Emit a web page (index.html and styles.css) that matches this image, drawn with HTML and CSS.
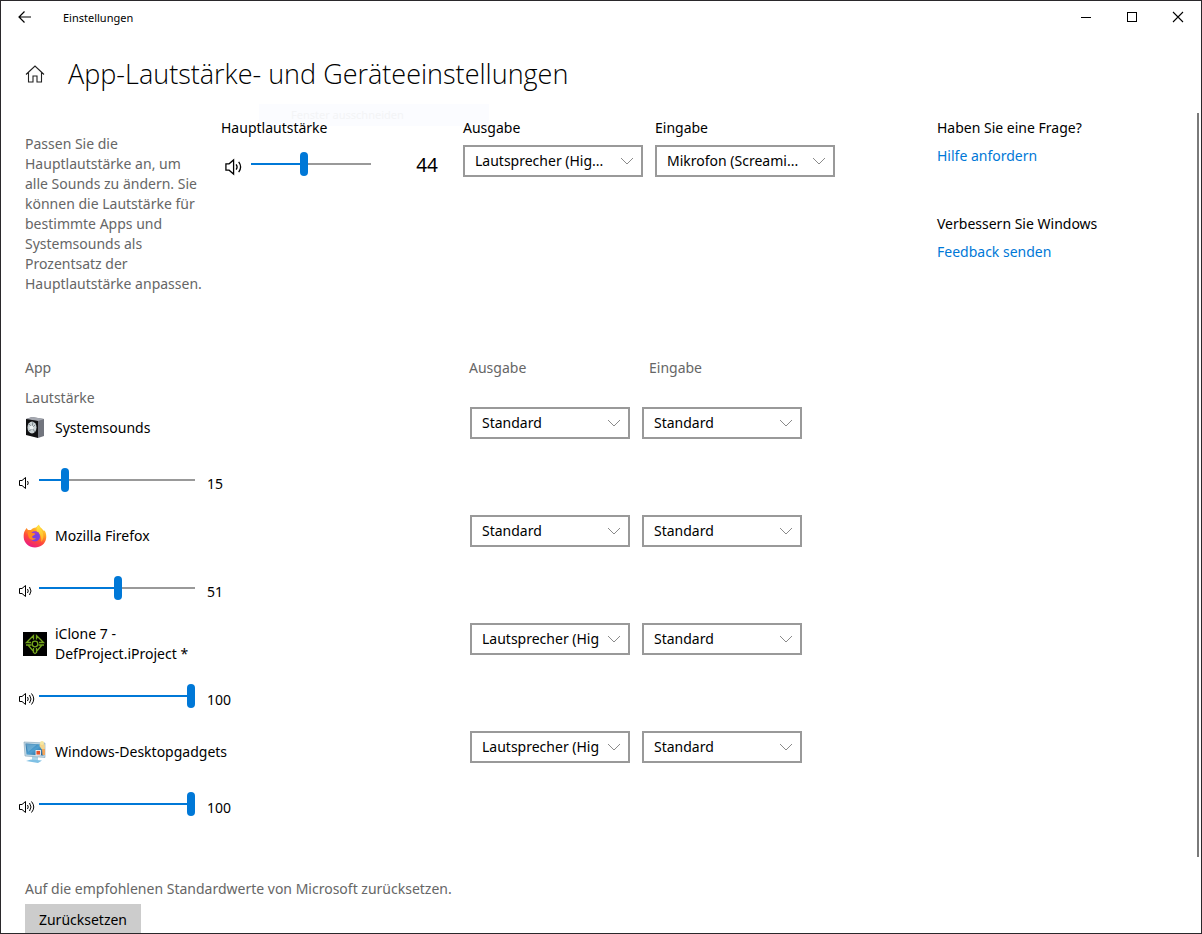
FILE: index.html
```html
<!DOCTYPE html>
<html lang="de">
<head>
<meta charset="utf-8">
<meta name="viewport" content="width=device-width, initial-scale=1">
<title>Einstellungen</title>
<link rel="stylesheet" href="styles.css">
</head>
<body>
<svg class="defs" aria-hidden="true">
  <symbol id="chevron" viewBox="0 0 14 8"><path d="M1 1l6 6 6-6" fill="none" stroke="#8a8a8a"/></symbol>
  <symbol id="vol1" viewBox="0 0 18 14"><path d="M1.500 4.500H4L7.500 1.500v11L4 9.500H1.500z M9.500 5q1.500 2 0 4" fill="none" stroke="#000"/></symbol>
  <symbol id="vol2" viewBox="0 0 18 14"><path d="M1.500 4.500H4L7.500 1.500v11L4 9.500H1.500z M9.500 5q1.500 2 0 4M11.500 3q3 4 0 8" fill="none" stroke="#000"/></symbol>
  <symbol id="vol3" viewBox="0 0 18 14"><path d="M1.500 4.500H4L7.500 1.500v11L4 9.500H1.500z M9.500 5q1.500 2 0 4M11.500 3q3 4 0 8M13.500 1.500q4.500 5.500 0 11" fill="none" stroke="#000"/></symbol>
</svg>
<div class="window">
  <div class="titlebar">
    <button class="back" aria-label="Zurück"><svg width="14" height="12" viewBox="0 0 14 12"><path d="M6.500 .5L1 6l5.500 5.500M1 6h12" fill="none" stroke="#000" stroke-width="1.200"/></svg></button>
    <span class="caption">Einstellungen</span>
    <button class="winbtn" aria-label="Minimieren"><svg width="12" height="12"><path d="M1 6.500h10" stroke="#000"/></svg></button>
    <button class="winbtn" aria-label="Maximieren"><svg width="12" height="12"><rect x="1.500" y="1.500" width="9" height="9" fill="none" stroke="#000"/></svg></button>
    <button class="winbtn" aria-label="Schließen"><svg width="12" height="12"><path d="M1 1l10 10M11 1L1 11" stroke="#000" stroke-width="1.100"/></svg></button>
  </div>
  <header class="header">
    <a class="home" href="#" aria-label="Startseite"><svg width="20" height="18" viewBox="0 0 20 18"><path d="M1 9.500L10 1l9 8.500M3.500 7.500v9.500h4.500v-6h4v6h4.500V7.500" fill="none" stroke="#222" stroke-width="1.100"/></svg></a>
    <h1>App-Lautstärke- und Geräteeinstellungen</h1>
  </header>
  <div class="ghost">Fenster ausschneiden</div>
  <div class="page">
    <main>
      <section class="master">
        <p class="intro">Passen Sie die Hauptlautstärke an, um alle Sounds zu ändern. Sie können die Lautstärke für bestimmte Apps und Systemsounds als Prozentsatz der Hauptlautstärke anpassen.</p>
        <div class="field">
          <label for="mv">Hauptlautstärke</label>
          <div class="slider">
            <svg class="vol" aria-hidden="true"><use href="#vol2"/></svg>
            <input id="mv" type="range" value="44" style="--v:44%">
            <output for="mv">44</output>
          </div>
        </div>
        <div class="field">
          <label for="mo">Ausgabe</label>
          <div class="drop"><select id="mo"><option>Lautsprecher (Hig...</option></select><svg aria-hidden="true"><use href="#chevron"/></svg></div>
        </div>
        <div class="field">
          <label for="mi">Eingabe</label>
          <div class="drop"><select id="mi"><option>Mikrofon (Screami...</option></select><svg aria-hidden="true"><use href="#chevron"/></svg></div>
        </div>
      </section>

      <section class="apps">
        <div class="heads">
          <span>App</span><span>Ausgabe</span><span>Eingabe</span>
          <span>Lautstärke</span>
        </div>

        <div class="app">
          <div class="name">
            <svg width="24" height="24" viewBox="0 0 24 24" aria-hidden="true"><path d="M3 3l6-2 12 2v17l-6 2z" fill="#72757e"/><path d="M3 3l6-2 12 2-6 2z" fill="#a5a8b0"/><path d="M3 3l12 2v17L3 19z" fill="#101012"/><ellipse cx="9" cy="11.500" rx="4.500" ry="6" fill="#c9d1d4"/><path d="M6 8l3 3 1-5M12 9l-3 3 3 4M6 15l3-2" stroke="#7d888d" fill="none"/><circle cx="8.500" cy="11.500" r="2" fill="#eef3f4"/></svg>
            <label for="v1">Systemsounds</label>
          </div>
          <div class="drop"><select aria-label="Ausgabe"><option>Standard</option></select><svg aria-hidden="true"><use href="#chevron"/></svg></div>
          <div class="drop"><select aria-label="Eingabe"><option>Standard</option></select><svg aria-hidden="true"><use href="#chevron"/></svg></div>
          <div class="slider"><svg class="vol" aria-hidden="true"><use href="#vol1"/></svg><input id="v1" type="range" value="15" style="--v:15%"><output for="v1">15</output></div>
        </div>

        <div class="app">
          <div class="name">
            <svg width="24" height="24" viewBox="0 0 24 24" aria-hidden="true">
              <defs>
                <linearGradient id="fx" x1=".8" y1="0" x2=".3" y2="1"><stop offset="0" stop-color="#fff04a"/><stop offset=".35" stop-color="#ffa021"/><stop offset=".65" stop-color="#ff4a3a"/><stop offset="1" stop-color="#e8178a"/></linearGradient>
                <linearGradient id="fy" x1="0" y1="0" x2="0" y2="1"><stop offset="0" stop-color="#ffea45"/><stop offset="1" stop-color="#ffad26"/></linearGradient>
              </defs>
              <path d="M3.500 4l1.500 2c1 0 1.700-.2 3 0 1-1.500 3-2.500 5-2.500L16 .5c.5 3 3 3.500 4.500 6 .5.500 1 .2 1.200 0C23 9 23.500 11 23.200 14c-.7 6-5.700 9.500-11.200 9.500S1 19.500.7 13.500C.5 10 1 8 2 6.500z" fill="url(#fx)"/>
              <path d="M15.500 1c.7 3 3.500 4.500 4.500 8s.3 7-2 9c1-4-.5-8-3-9.500-2-1.500-2-5 .5-7.500z" fill="url(#fy)"/>
              <circle cx="12" cy="12.500" r="5" fill="#7b3fe0"/><path d="M8 9c2-2 6-2 8 0l-2 1z" fill="#9b3bd0"/>
              <path d="M4.500 8c2-1.500 3.500-.5 4.500 1 1.500 0 3 0 3.500 1-1 1.500-3 1.200-3.500 3 .8 1.500 2.500 1.500 4 1-1.500 2.500-5 2.500-6.500.5C5 12.500 5 10 4.500 8z" fill="#ff8a1e"/>
            </svg>
            <label for="v2">Mozilla Firefox</label>
          </div>
          <div class="drop"><select aria-label="Ausgabe"><option>Standard</option></select><svg aria-hidden="true"><use href="#chevron"/></svg></div>
          <div class="drop"><select aria-label="Eingabe"><option>Standard</option></select><svg aria-hidden="true"><use href="#chevron"/></svg></div>
          <div class="slider"><svg class="vol" aria-hidden="true"><use href="#vol2"/></svg><input id="v2" type="range" value="51" style="--v:51%"><output for="v2">51</output></div>
        </div>

        <div class="app">
          <div class="name">
            <svg width="24" height="24" viewBox="0 0 24 24" aria-hidden="true"><rect width="24" height="24" fill="#000"/><g fill="none" stroke="#74a51c" stroke-width="1.300"><path d="M10.500 7.500V3.500L6 8M13.500 7.500V3.500L18 8M8 10.500H3.500L6 8M16 10.500h4.500L18 8M3 13h5.500M21 13h-5.500M5 13l5.500 6.500V16M19 13l-5.500 6.500V16M10 20l2 1.500 2-1.500"/><circle cx="12" cy="12" r="2.800"/></g></svg>
            <label for="v3">iClone 7 - DefProject.iProject *</label>
          </div>
          <div class="drop"><select aria-label="Ausgabe"><option>Lautsprecher (Hig</option></select><svg aria-hidden="true"><use href="#chevron"/></svg></div>
          <div class="drop"><select aria-label="Eingabe"><option>Standard</option></select><svg aria-hidden="true"><use href="#chevron"/></svg></div>
          <div class="slider"><svg class="vol" aria-hidden="true"><use href="#vol3"/></svg><input id="v3" type="range" value="100" style="--v:100%"><output for="v3">100</output></div>
        </div>

        <div class="app">
          <div class="name">
            <svg width="24" height="24" viewBox="0 0 24 24" aria-hidden="true">
              <defs><linearGradient id="mon" x1="0" y1="0" x2="1" y2="1"><stop offset="0" stop-color="#2f6f9f"/><stop offset=".5" stop-color="#4f9fd0"/><stop offset="1" stop-color="#1d5c8e"/></linearGradient></defs>
              <path d="M9 16l6 1v4H9z" fill="#a9d4ea"/><path d="M3 21l5-1.500 11 1-4 2.500z" fill="#7fc0e4"/>
              <path d="M1 2l21 1v14.500L2 16z" fill="#c3d9e6" stroke="#83a3b5" stroke-width=".6"/><path d="M2.500 3.500l18 1V15.500l-17-1z" fill="url(#mon)"/><path d="M3 4l11 .5L5 12z" fill="#8cc6e6" opacity=".5"/>
              <rect x="13" y="10.500" width="4.500" height="4.500" fill="#e4532a" stroke="#fff" stroke-width=".8"/><path d="M17 3h3.500l1.500 3-1 4-2.500-1-2-3z" fill="#f4d58a"/><circle cx="19" cy="3" r="2" fill="#f6e7a0"/><path d="M19 9h3v6h-2.500z" fill="#f5a55a"/>
            </svg>
            <label for="v4">Windows-Desktopgadgets</label>
          </div>
          <div class="drop"><select aria-label="Ausgabe"><option>Lautsprecher (Hig</option></select><svg aria-hidden="true"><use href="#chevron"/></svg></div>
          <div class="drop"><select aria-label="Eingabe"><option>Standard</option></select><svg aria-hidden="true"><use href="#chevron"/></svg></div>
          <div class="slider"><svg class="vol" aria-hidden="true"><use href="#vol3"/></svg><input id="v4" type="range" value="100" style="--v:100%"><output for="v4">100</output></div>
        </div>
      </section>

      <section class="reset">
        <p>Auf die empfohlenen Standardwerte von Microsoft zurücksetzen.</p>
        <button>Zurücksetzen</button>
      </section>
    </main>
    <aside>
      <h2>Haben Sie eine Frage?</h2>
      <a href="#">Hilfe anfordern</a>
      <h2>Verbessern Sie Windows</h2>
      <a href="#">Feedback senden</a>
    </aside>
  </div>
  <div class="scrollthumb"></div>
</div>
</body>
</html>
```
FILE: styles.css
```css
* { box-sizing: border-box; }

body {
  margin: 0;
  color: #000;
  background: #fff;
  font: 14px/20px "Noto Sans", "Open Sans", sans-serif;
}

h1, h2, p { margin: 0; font-weight: 400; }
svg { display: block; flex: none; }
button { border: 0; padding: 0; background: none; font: inherit; color: inherit; }
a { color: #0078d7; text-decoration: none; }
.defs { position: absolute; width: 0; height: 0; }

.window {
  position: relative;
  height: 100vh;
  border: 1px solid #2a282b;
  overflow: hidden;
}

.titlebar { display: flex; height: 32px; }
.back { display: grid; place-items: center; width: 48px; }
.caption { flex: 1; padding-left: 14px; font-size: 11px; line-height: 34px; }
.winbtn { display: grid; place-items: center; width: 46px; }

.header {
  display: flex;
  align-items: center;
  gap: 23px;
  height: 81px;
  padding-left: 24px;
}
h1 { font: 300 27px/40px "Open Sans", "Noto Sans", sans-serif; }

.ghost {
  position: absolute;
  z-index: -1;
  top: 103px;
  left: 258px;
  width: 230px;
  padding: 4px 0 4px 32px;
  background: #fbfcff;
  color: #f3f4f6;
  font-size: 11px;
  line-height: 14px;
}

.page { display: flex; padding-top: 4px; }
main { flex: 1; }
aside { width: 264px; }
aside h2 { font-size: 14px; line-height: 20px; }
aside a { display: block; margin: 8px 0 48px; }

.master {
  display: grid;
  grid-template-columns: 184px 230px 180px 180px;
  column-gap: 12px;
  padding-left: 24px;
}
.intro { padding: 16px 6px 0 0; color: #666; }
.field label { display: block; margin-bottom: 7px; }

.drop { position: relative; }
.drop svg {
  position: absolute;
  top: 12px;
  right: 9px;
  width: 14px;
  height: 8px;
  pointer-events: none;
}
select {
  appearance: none;
  display: block;
  width: 100%;
  height: 32px;
  margin: 0;
  padding: 0 0 0 10px;
  border: 2px solid #999;
  border-radius: 0;
  background: #fff;
  color: #000;
  font: inherit;
}

.slider { display: flex; align-items: center; }
.vol { width: 18px; height: 14px; margin-top: 5px; }
input[type="range"] {
  appearance: none;
  width: 156px;
  height: 24px;
  margin: 0;
  background: linear-gradient(to right, #0078d7 var(--v), #999 var(--v)) center / 100% 2px no-repeat;
}
input[type="range"]::-webkit-slider-thumb {
  appearance: none;
  width: 8px;
  height: 24px;
  border-radius: 4px;
  background: #0078d7;
}
.master .slider { height: 38px; padding-left: 3px; }
.master .vol { width: 23px; height: 18px; margin-right: 4px; }
.master input { width: 120px; }
.master output { width: 67px; padding-top: 2px; text-align: right; font-size: 19px; line-height: 24px; }

.apps { padding: 68px 0 0 17px; }
.heads {
  display: grid;
  grid-template-columns: 444px 180px 160px;
  row-gap: 18px;
  padding-left: 7px;
  color: #666;
  line-height: 12px;
}
.app {
  display: grid;
  grid-template-columns: 440px 160px 160px;
  grid-template-rows: 48px 60px;
  column-gap: 12px;
}
.name { display: flex; align-items: center; gap: 8px; padding-left: 5px; }
.name label { max-width: 180px; }
.app .drop { margin-top: 3px; height: 32px; }
.app .slider { align-self: start; margin-top: 16px; height: 24px; }
.app input { margin-left: 3px; }
.app output { margin: 7px 0 0 12px; }

.reset { padding: 43px 0 0 24px; color: #666; }
.reset button {
  margin-top: 5px;
  width: 116px;
  height: 32px;
  background: #ccc;
  color: #000;
}

.scrollthumb {
  position: absolute;
  top: 112px;
  right: 2px;
  bottom: 76px;
  width: 2px;
  background: #7a7a7a;
}
```
